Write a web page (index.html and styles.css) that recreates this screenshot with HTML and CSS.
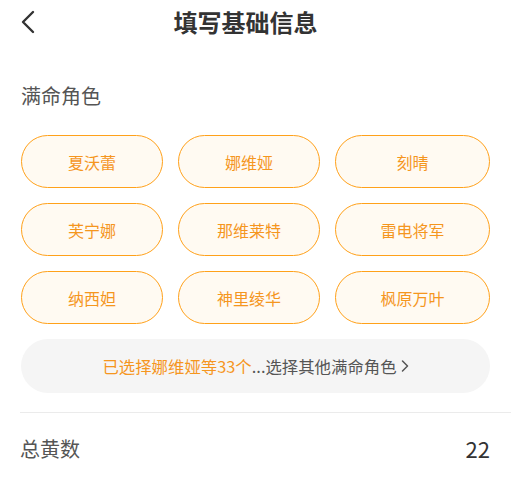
FILE: index.html
```html
<!DOCTYPE html>
<html lang="zh-CN">
<head>
  <meta charset="UTF-8">
  <meta name="viewport" content="width=device-width, initial-scale=1.0">
  <title>填写基础信息</title>
  <link rel="stylesheet" href="styles.css">
</head>
<body>
  <header class="top-bar">
    <button class="back-btn" aria-label="返回">
      <svg width="16" height="24" viewBox="0 0 16 24">
        <path d="M13 2 L3 12 L13 22" fill="none" stroke="#333" stroke-width="2.4" stroke-linecap="round" stroke-linejoin="round"/>
      </svg>
    </button>
    <h1 class="page-title">填写基础信息</h1>
  </header>

  <section class="section">
    <h2 class="section-title">满命角色</h2>
    <div class="chip-grid">
      <div class="chip">夏沃蕾</div>
      <div class="chip">娜维娅</div>
      <div class="chip">刻晴</div>
      <div class="chip">芙宁娜</div>
      <div class="chip">那维莱特</div>
      <div class="chip">雷电将军</div>
      <div class="chip">纳西妲</div>
      <div class="chip">神里绫华</div>
      <div class="chip">枫原万叶</div>
    </div>
    <div class="more-bar">
      <span class="picked">已选择娜维娅等33个</span><span class="more-text">...选择其他满命角色</span>
      <svg class="more-arrow" width="8" height="14" viewBox="0 0 8 14">
        <path d="M1.5 2 L6.5 7 L1.5 12" fill="none" stroke="#555" stroke-width="1.5" stroke-linecap="round" stroke-linejoin="round"/>
      </svg>
    </div>
  </section>

  <div class="info-list">
    <div class="info-row">
      <span class="info-label">总黄数</span>
      <span class="info-value">22</span>
    </div>
  </div>
</body>
</html>
```

FILE: styles.css
```css
body {
  margin: 0;
  padding: 0;
  background: #fff;
  font-family: "Noto Sans CJK SC", "Noto Sans", sans-serif;
  color: #333;
}

.top-bar {
  display: flex;
  align-items: center;
  height: 44px;
  padding: 0 20px;
}

.back-btn {
  background: none;
  border: none;
  padding: 0;
  width: 16px;
  height: 24px;
  cursor: pointer;
}

.page-title {
  flex: 1;
  margin: 0 36px 0 0;
  text-align: center;
  font-size: 24px;
  font-weight: 700;
  color: #333;
  line-height: 44px;
}

.section {
  padding: 0 21px 0 21px;
}

.section-title {
  margin: 37px 0 0;
  font-size: 20px;
  font-weight: 400;
  color: #555;
  line-height: 30px;
}

.chip-grid {
  display: grid;
  grid-template-columns: 142px 142px 1fr;
  column-gap: 15px;
  row-gap: 15px;
  margin-top: 24px;
}

.chip {
  height: 51px;
  border: 1px solid #ffa11a;
  border-radius: 27px;
  background: #fffaf2;
  color: #f5961e;
  font-size: 16px;
  display: flex;
  align-items: center;
  justify-content: center;
}

.more-bar {
  margin-top: 15px;
  height: 54px;
  border-radius: 27px;
  background: #f5f5f5;
  display: flex;
  align-items: center;
  justify-content: center;
  font-size: 16.4px;
}

.picked {
  color: #f5961e;
}

.more-text {
  color: #555;
}

.more-arrow {
  margin-left: 4px;
}

.info-list {
  margin-top: 19px;
  margin-left: 20px;
  border-top: 1px solid #ebebeb;
}

.info-row {
  display: flex;
  justify-content: space-between;
  align-items: center;
  height: 70px;
  padding-right: 21px;
}

.info-label {
  font-size: 20px;
  color: #555;
}

.info-value {
  font-size: 22px;
  color: #333;
}
```
